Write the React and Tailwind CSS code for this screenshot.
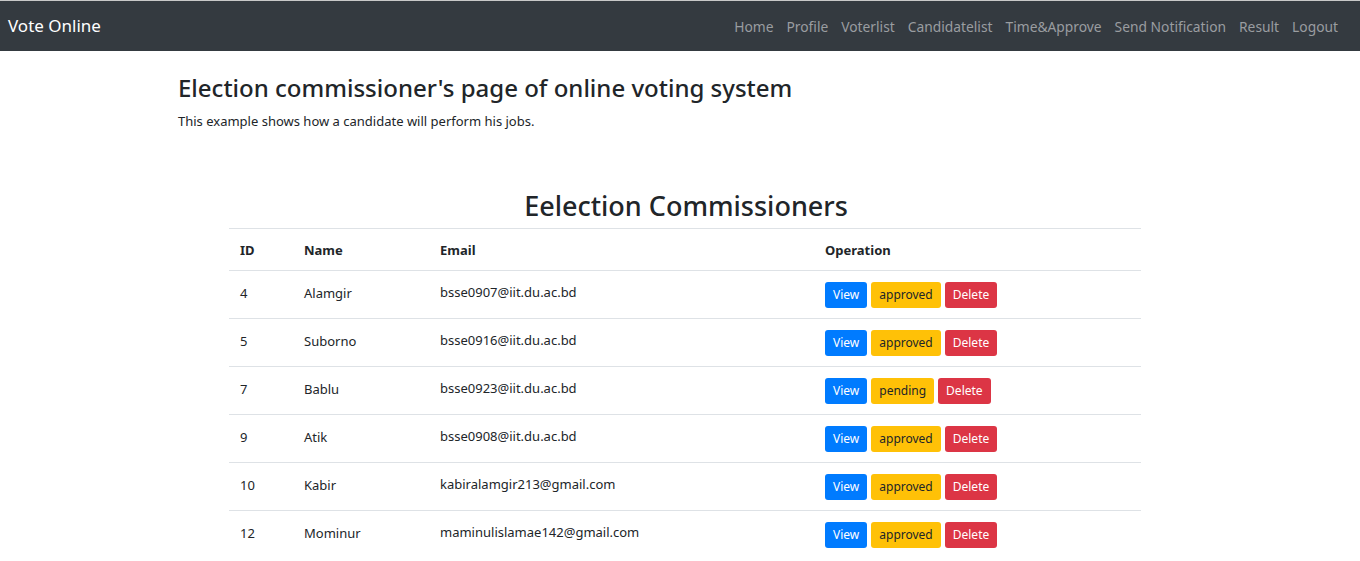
import React from 'react';

const links = ['Home', 'Profile', 'Voterlist', 'Candidatelist', 'Time&Approve', 'Send Notification', 'Result', 'Logout'];

const rows = [
  { id: 4, name: 'Alamgir', email: 'bsse0907@iit.du.ac.bd', status: 'approved' },
  { id: 5, name: 'Suborno', email: 'bsse0916@iit.du.ac.bd', status: 'approved' },
  { id: 7, name: 'Bablu', email: 'bsse0923@iit.du.ac.bd', status: 'pending' },
  { id: 9, name: 'Atik', email: 'bsse0908@iit.du.ac.bd', status: 'approved' },
  { id: 10, name: 'Kabir', email: 'kabiralamgir213@gmail.com', status: 'approved' },
  { id: 12, name: 'Mominur', email: 'maminulislamae142@gmail.com', status: 'approved' },
];

const App = () => {
  return (
    <div className="min-h-screen bg-white text-[#212529] font-['Noto_Sans',sans-serif]">
      <div className="h-px bg-[#c8c8c8]" />
      <nav className="h-[50px] bg-[#343a40] flex items-center justify-between pl-2 pr-[22px]">
        <span className="text-white text-[17px]">Vote Online</span>
        <ul className="flex gap-[13px] pt-[2px]">
          {links.map((l) => (
            <li key={l} className="text-[13.8px] text-[#9a9da0]">
              {l}
            </li>
          ))}
        </ul>
      </nav>

      <div className="pl-[178px] pt-[21px]">
        <h3 className="text-[24px] leading-[32px] font-medium">Election commissioner's page of online voting system</h3>
        <p className="text-[13px] mt-[8px]">This example shows how a candidate will perform his jobs.</p>
      </div>

      <div className="w-[912px] ml-[229px] mt-[55px]">
        <h2 className="text-center text-[27px] leading-[38px] font-medium pl-[2px]">Eelection Commissioners</h2>
        <table className="w-full text-[13px] mt-[3px]">
          <thead>
            <tr className="border-t border-b border-[#dee2e6] h-[42px] text-left">
              <th className="pl-[11px] pt-[3px] w-[75px] font-bold">ID</th>
              <th className="pt-[3px] w-[136px] font-bold">Name</th>
              <th className="pt-[3px] w-[385px] font-bold">Email</th>
              <th className="pt-[3px] font-bold">Operation</th>
            </tr>
          </thead>
          <tbody>
            {rows.map((r, i) => (
              <tr key={r.id} className={`h-[48px] ${i < rows.length - 1 ? 'border-b border-[#dee2e6]' : ''}`}>
                <td className="pl-[11px] align-top pt-[13px]">{r.id}</td>
                <td className="align-top pt-[13px]">{r.name}</td>
                <td className="align-top pt-[12px]">{r.email}</td>
                <td className="align-top pt-[11px]">
                  <div className="flex gap-[4px]">
                    <button className="h-[26px] px-[8px] rounded-[3px] bg-[#007bff] text-white text-[12px]">View</button>
                    <button className="h-[26px] px-[8px] rounded-[3px] bg-[#ffc107] text-[#212529] text-[12px]">{r.status}</button>
                    <button className="h-[26px] px-[8px] rounded-[3px] bg-[#dc3545] text-white text-[12px]">Delete</button>
                  </div>
                </td>
              </tr>
            ))}
          </tbody>
        </table>
      </div>
    </div>
  );
};

export default App;
